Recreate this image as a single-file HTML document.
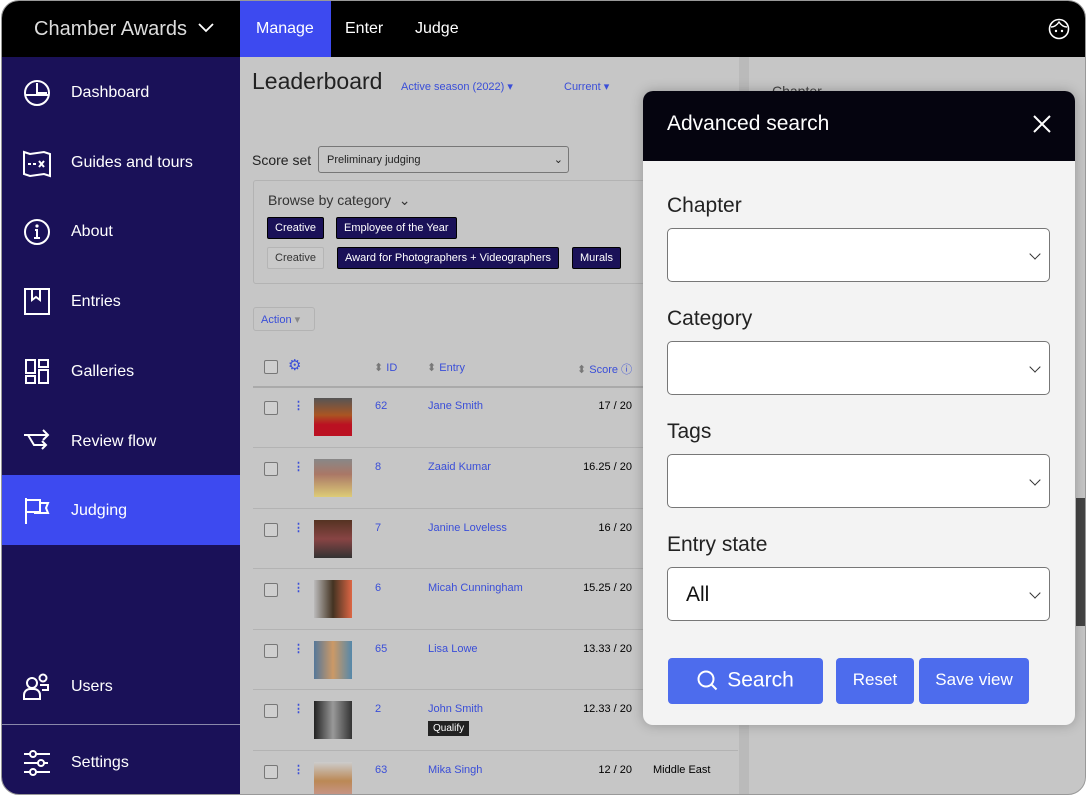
<!DOCTYPE html>
<html><head><meta charset="utf-8"><style>
*{box-sizing:border-box;margin:0;padding:0}
body{width:1086px;height:797px;background:#fff;font-family:"Liberation Sans",sans-serif;position:relative;overflow:hidden}
.win{position:absolute;left:1px;top:0px;width:1085px;height:795px;border-radius:18px;overflow:hidden;background:#c6c6c6;border:1px solid #999}
.top{position:absolute;left:0;top:0;width:100%;height:56px;background:#000;color:#fff}
.side{position:absolute;left:0;top:56px;width:238px;height:740px;background:#1a1158;color:#fff}
.ni{position:absolute;left:0;width:238px;height:70px;font-size:16px}
.ni span{position:absolute;left:69px;top:27px}
.ni svg{position:absolute;left:20px;top:21px}
.a{color:#3a4ed8}
.abs{position:absolute}
.row{position:absolute;left:251px;width:485px;height:61px;border-top:1px solid #b3b3b3;font-size:11px}
.cb{position:absolute;left:11px;width:14px;height:14px;border:1px solid #777;border-radius:2px;background:#cfcfcf}
.th{position:absolute;left:61px;width:38px;height:38px}
.tag{position:absolute;height:22px;font-size:11px;color:#fff;background:#1a1158;border:1px solid #000;border-radius:2px;padding:4px 7px}
.modal{position:absolute;left:641px;top:90px;width:432px;height:634px;background:#f3f3f3;border-radius:10px;overflow:hidden;box-shadow:0 0 12px rgba(0,0,0,.25)}
.lbl{position:absolute;left:24px;font-size:21px;color:#222}
.sel{position:absolute;left:24px;width:383px;height:54px;background:#fff;border:1.5px solid #777;border-radius:5px}
.sel:after{content:"";position:absolute;right:10px;top:21px;width:7px;height:7px;border-right:1.5px solid #333;border-bottom:1.5px solid #333;transform:rotate(45deg)}
.btn{position:absolute;top:567px;height:46px;background:#4d6ced;color:#fff;border-radius:4px;font-size:17px;text-align:center;line-height:44px}
</style></head><body>
<div class="win">
<div class="top">
 <div class="abs" style="left:32px;top:17px;font-size:20px;color:#ddd">Chamber Awards</div>
 <svg class="abs" style="left:196px;top:22px" width="16" height="10"><path d="M1 1l7 7 7-7" stroke="#fff" stroke-width="1.8" fill="none"/></svg>
 <div class="abs" style="left:238px;top:0;width:91px;height:56px;background:#3d4af0"></div>
 <div class="abs" style="left:254px;top:19px;font-size:16px">Manage</div>
 <div class="abs" style="left:343px;top:19px;font-size:16px">Enter</div>
 <div class="abs" style="left:413px;top:19px;font-size:16px">Judge</div>
 <svg class="abs" style="left:1046px;top:17px" width="22" height="22"><circle cx="11" cy="11" r="9.5" stroke="#fff" stroke-width="1.6" fill="none"/><path d="M3 9c3 0 6-2 8-5 2 3 5 5 8 5" stroke="#fff" stroke-width="1.4" fill="none"/><circle cx="8" cy="13" r="1.2" fill="#fff"/><circle cx="14" cy="13" r="1.2" fill="#fff"/></svg>
</div>
<div class="side">
 <div class="ni" style="top:0"><svg width="30" height="30"><circle cx="15" cy="15" r="12" stroke="#fff" stroke-width="2" fill="none"/><path d="M15 5v10h10M3 17h24" stroke="#fff" stroke-width="2" fill="none"/></svg><span>Dashboard</span></div>
 <div class="ni" style="top:70px"><svg width="30" height="30"><path d="M2 4l6 2 14-2 6 2v22l-6-2-14 2-6-2z" stroke="#fff" stroke-width="2" fill="none"/><path d="M6 16h3m2 0h3m3-3l5 6m0-6l-5 6" stroke="#fff" stroke-width="2"/></svg><span>Guides and tours</span></div>
 <div class="ni" style="top:139px"><svg width="30" height="30"><circle cx="15" cy="15" r="12" stroke="#fff" stroke-width="2" fill="none"/><circle cx="15" cy="9" r="1.6" fill="#fff"/><path d="M13 13h2v8m-3 0h6" stroke="#fff" stroke-width="2" fill="none"/></svg><span>About</span></div>
 <div class="ni" style="top:209px"><svg width="30" height="30"><rect x="3" y="2" width="24" height="25" stroke="#fff" stroke-width="2" fill="none"/><path d="M10 3v10l4-3 4 3V3" stroke="#fff" stroke-width="2" fill="none"/></svg><span>Entries</span></div>
 <div class="ni" style="top:279px"><svg width="30" height="30"><rect x="4" y="3" width="9" height="13" stroke="#fff" stroke-width="2" fill="none"/><rect x="4" y="19" width="9" height="7" stroke="#fff" stroke-width="2" fill="none"/><rect x="17" y="3" width="9" height="7" stroke="#fff" stroke-width="2" fill="none"/><rect x="17" y="13" width="9" height="13" stroke="#fff" stroke-width="2" fill="none"/></svg><span>Galleries</span></div>
 <div class="ni" style="top:349px"><svg width="30" height="30"><path d="M2 8h24m-5-5l5 5-5 5M6 8l6 10h12m-4-4l4 4-4 4" stroke="#fff" stroke-width="2" fill="none"/></svg><span>Review flow</span></div>
 <div class="ni" style="top:418px;background:#3d4af0"><svg width="30" height="30"><path d="M4 2v26M4 4h14v12H4m14-9h8l-2 5 2 5H12" stroke="#fff" stroke-width="2" fill="none"/></svg><span>Judging</span></div>
 <div class="ni" style="top:594px"><svg width="30" height="30"><circle cx="10" cy="11" r="5" stroke="#fff" stroke-width="2" fill="none"/><path d="M2 27v-4a6 6 0 0 1 6-6h4a6 6 0 0 1 6 6v4z" stroke="#fff" stroke-width="2" fill="none"/><circle cx="21" cy="6" r="3.5" stroke="#fff" stroke-width="2" fill="none"/><path d="M18 13h8v5h-6" stroke="#fff" stroke-width="2" fill="none"/></svg><span>Users</span></div>
 <div class="abs" style="left:0;top:667px;width:238px;height:1px;background:#8a88aa"></div>
 <div class="ni" style="top:670px"><svg width="30" height="30"><path d="M2 6h6m6 0h14M2 15h14m6 0h4M2 24h6m6 0h14" stroke="#fff" stroke-width="2"/><circle cx="11" cy="6" r="3" stroke="#fff" stroke-width="2" fill="none"/><circle cx="19" cy="15" r="3" stroke="#fff" stroke-width="2" fill="none"/><circle cx="11" cy="24" r="3" stroke="#fff" stroke-width="2" fill="none"/></svg><span>Settings</span></div>
</div>
<!-- main -->
<div class="abs" style="left:250px;top:67px;font-size:23px;color:#222">Leaderboard</div>
<div class="abs a" style="left:399px;top:79px;font-size:11px">Active season (2022) ▾</div>
<div class="abs a" style="left:562px;top:79px;font-size:11px">Current ▾</div>
<div class="abs" style="left:250px;top:151px;font-size:14px;color:#222">Score set</div>
<div class="abs" style="left:316px;top:145px;width:251px;height:27px;border:1px solid #777;border-radius:3px;font-size:11px;padding:7px 8px;color:#222">Preliminary judging<span style="position:absolute;right:5px;top:6px">⌄</span></div>
<div class="abs" style="left:251px;top:179px;width:400px;height:104px;border:1px solid #b3b3b3;border-radius:3px"></div>
<div class="abs" style="left:266px;top:191px;font-size:14px;color:#333">Browse by category&nbsp; ⌄</div>
<div class="tag" style="left:265px;top:216px">Creative</div>
<div class="tag" style="left:334px;top:216px">Employee of the Year</div>
<div class="tag" style="left:265px;top:246px;background:#c9c9c9;color:#333;border-color:#b5b5b5">Creative</div>
<div class="tag" style="left:335px;top:246px">Award for Photographers + Videographers</div>
<div class="tag" style="left:570px;top:246px">Murals</div>
<div class="abs" style="left:251px;top:306px;width:62px;height:24px;border:1px solid #b3b3b3;border-radius:3px;font-size:11px;padding:5px 7px" ><span class="a">Action</span> <span style="color:#888">▾</span></div>
<div class="cb" style="left:262px;top:359px"></div>
<div class="abs a" style="left:286px;top:355px;font-size:15px">⚙</div>
<div class="abs a" style="left:372px;top:360px;font-size:11px"><span style="color:#777">⬍</span> ID</div>
<div class="abs a" style="left:425px;top:360px;font-size:11px"><span style="color:#777">⬍</span> Entry</div>
<div class="abs a" style="left:575px;top:360px;font-size:11px"><span style="color:#777">⬍</span> Score ⓘ</div>
<div class="abs" style="left:251px;top:385px;width:485px;height:2px;background:#aaa"></div>

<div class="row" style="top:386px;border:none"><div class="cb" style="top:14px"></div><div class="abs a" style="left:40px;top:12px;font-weight:bold">⋮</div><div class="th" style="top:11px;background:linear-gradient(#555,#a52 45%,#b12 70%)"></div><div class="abs a" style="left:122px;top:13px">62</div><div class="abs a" style="left:175px;top:13px">Jane Smith</div><div class="abs" style="right:106px;top:13px">17 / 20</div></div>
<div class="row" style="top:446px"><div class="cb" style="top:14px"></div><div class="abs a" style="left:40px;top:12px;font-weight:bold">⋮</div><div class="th" style="top:11px;background:linear-gradient(#888,#a76 40%,#dc7)"></div><div class="abs a" style="left:122px;top:13px">8</div><div class="abs a" style="left:175px;top:13px">Zaaid Kumar</div><div class="abs" style="right:106px;top:13px">16.25 / 20</div></div>
<div class="row" style="top:507px"><div class="cb" style="top:14px"></div><div class="abs a" style="left:40px;top:12px;font-weight:bold">⋮</div><div class="th" style="top:11px;background:linear-gradient(#532,#844 50%,#333)"></div><div class="abs a" style="left:122px;top:13px">7</div><div class="abs a" style="left:175px;top:13px">Janine Loveless</div><div class="abs" style="right:106px;top:13px">16 / 20</div></div>
<div class="row" style="top:567px"><div class="cb" style="top:14px"></div><div class="abs a" style="left:40px;top:12px;font-weight:bold">⋮</div><div class="th" style="top:11px;background:linear-gradient(90deg,#bbb,#432 50%,#d64)"></div><div class="abs a" style="left:122px;top:13px">6</div><div class="abs a" style="left:175px;top:13px">Micah Cunningham</div><div class="abs" style="right:106px;top:13px">15.25 / 20</div></div>
<div class="row" style="top:628px"><div class="cb" style="top:14px"></div><div class="abs a" style="left:40px;top:12px;font-weight:bold">⋮</div><div class="th" style="top:11px;background:linear-gradient(90deg,#579,#c96 50%,#58a)"></div><div class="abs a" style="left:122px;top:13px">65</div><div class="abs a" style="left:175px;top:13px">Lisa Lowe</div><div class="abs" style="right:106px;top:13px">13.33 / 20</div></div>
<div class="row" style="top:688px"><div class="cb" style="top:14px"></div><div class="abs a" style="left:40px;top:12px;font-weight:bold">⋮</div><div class="th" style="top:11px;background:linear-gradient(90deg,#222,#999 50%,#333)"></div><div class="abs a" style="left:122px;top:13px">2</div><div class="abs a" style="left:175px;top:13px">John Smith</div><div class="abs" style="left:175px;top:31px;background:#222;color:#fff;font-size:10px;padding:2px 5px">Qualify</div><div class="abs" style="right:106px;top:13px">12.33 / 20</div></div>
<div class="row" style="top:749px"><div class="cb" style="top:14px"></div><div class="abs a" style="left:40px;top:12px;font-weight:bold">⋮</div><div class="th" style="top:11px;background:linear-gradient(#ccc,#b85 50%,#c99)"></div><div class="abs a" style="left:122px;top:13px">63</div><div class="abs a" style="left:175px;top:13px">Mika Singh</div><div class="abs" style="right:106px;top:13px">12 / 20</div><div class="abs" style="left:400px;top:13px">Middle East</div></div>

<div class="abs" style="left:737px;top:56px;width:10px;height:740px;background:#bababa"></div>
<div class="abs" style="left:770px;top:82px;font-size:14px;color:#444">Chapter</div>
<div class="abs" style="left:1074px;top:497px;width:10px;height:128px;background:#444"></div>

<div class="modal">
 <div class="abs" style="left:0;top:0;width:100%;height:70px;background:#05040f"></div>
 <div class="abs" style="left:24px;top:21px;font-size:21px;color:#fff">Advanced search</div>
 <svg class="abs" style="left:390px;top:24px" width="18" height="18"><path d="M1 1l16 16M17 1L1 17" stroke="#fff" stroke-width="2"/></svg>
 <div class="lbl" style="top:103px">Chapter</div><div class="sel" style="top:137px"></div>
 <div class="lbl" style="top:216px">Category</div><div class="sel" style="top:250px"></div>
 <div class="lbl" style="top:329px">Tags</div><div class="sel" style="top:363px"></div>
 <div class="lbl" style="top:442px">Entry state</div><div class="sel" style="top:476px"><span style="position:absolute;left:18px;top:15px;font-size:21px;color:#111">All</span></div>
 <div class="btn" style="left:25px;width:155px"><svg style="vertical-align:middle;margin-right:8px" width="22" height="22"><circle cx="9" cy="9" r="7.5" stroke="#fff" stroke-width="2" fill="none"/><path d="M14.5 14.5l5 5" stroke="#fff" stroke-width="2"/></svg><span style="font-size:21px;vertical-align:middle">Search</span></div>
 <div class="btn" style="left:193px;width:78px">Reset</div>
 <div class="btn" style="left:276px;width:110px">Save view</div>
</div>
</div>
</body></html>
